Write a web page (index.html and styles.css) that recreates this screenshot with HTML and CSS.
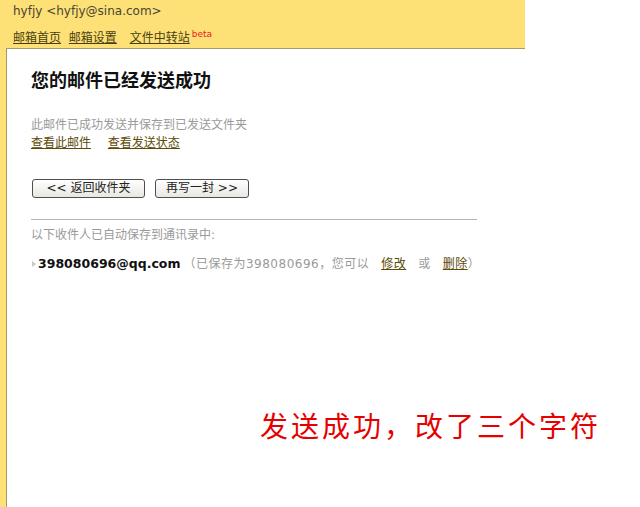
FILE: index.html
```html
<!DOCTYPE html>
<html lang="zh-CN">
<head>
    <meta charset="UTF-8">
    <title>邮件发送成功</title>
    <link rel="stylesheet" href="styles.css">
</head>
<body>
    <div class="wrap">
        <div class="header">
            <div class="user">hyfjy &lt;hyfjy@sina.com&gt;</div>
            <div class="nav">
                <a href="#">邮箱首页</a>
                <a href="#">邮箱设置</a>
                <a href="#" class="far">文件中转站</a><sup class="beta">beta</sup>
            </div>
        </div>
        <div class="main">
            <h2 class="title">您的邮件已经发送成功</h2>
            <p class="tip">此邮件已成功发送并保存到已发送文件夹</p>
            <div class="links">
                <a href="#">查看此邮件</a>
                <a href="#">查看发送状态</a>
            </div>
            <div class="buttons">
                <button class="btn back">&lt;&lt; 返回收件夹</button>
                <button class="btn again">再写一封 &gt;&gt;</button>
            </div>
            <div class="divider"></div>
            <p class="tip saved">以下收件人已自动保存到通讯录中:</p>
            <div class="contact">
                <span class="arrow"></span>
                <b class="addr">398080696@qq.com</b>
                <span class="note">（已保存为398080696，您可以<a href="#">修改</a>或<a href="#" class="last">删除</a>）</span>
            </div>
        </div>
    </div>
    <div class="remark">发送成功，改了三个字符</div>
</body>
</html>
```

FILE: styles.css
```css
body {
    margin: 0;
    background: #fff;
    font-family: "DejaVu Sans", "Noto Sans CJK SC", sans-serif;
    font-size: 12px;
    color: #333;
}

.wrap {
    width: 525px;
    min-height: 100vh;
    background: #fde177;
    display: flex;
    flex-direction: column;
}

.header {
    height: 48px;
    padding-left: 13px;
    box-sizing: border-box;
}

.user {
    padding-top: 3px;
    line-height: 17px;
    font-size: 12px;
    color: #4a4434;
}

.nav {
    margin-top: 6px;
    line-height: 16px;
}

.nav a {
    color: #4a3f10;
    margin-right: 4px;
}

.nav a.far {
    margin-left: 5px;
    margin-right: 0;
}

.beta {
    color: #e8231d;
    font-size: 9px;
    margin-left: 2px;
    vertical-align: 5px;
}

.main {
    flex: 1;
    margin-left: 6px;
    background: #fff;
    border-top: 1px solid #a39b6b;
    border-left: 1px solid #a39b6b;
    padding: 22px 0 0 24px;
}

.title {
    margin: 0;
    font-size: 18px;
    line-height: 20px;
    color: #111;
    font-weight: bold;
}

.tip {
    margin: 25px 0 0;
    line-height: 18px;
    color: #9a9a9a;
}

.links {
    line-height: 18px;
}

.links a {
    color: #5c4a06;
    margin-right: 13px;
}

.buttons {
    margin-top: 27px;
    display: flex;
    gap: 10px;
    margin-left: 1px;
}

.btn {
    height: 19px;
    padding: 0;
    border: 1px solid #4f4f4f;
    border-radius: 3px;
    background: linear-gradient(#ffffff, #e9e7e2);
    font-family: "DejaVu Sans", "Noto Sans CJK SC", sans-serif;
    font-size: 12px;
    color: #222;
    line-height: 17px;
}

.back {
    width: 113px;
}

.again {
    width: 94px;
}

.divider {
    margin-top: 21px;
    width: 446px;
    height: 1px;
    background: #b5b5b5;
}

.saved {
    margin-top: 6px;
}

.contact {
    margin-top: 11px;
    line-height: 18px;
    display: flex;
    align-items: center;
}

.arrow {
    width: 0;
    height: 0;
    border-top: 3px solid transparent;
    border-bottom: 3px solid transparent;
    border-left: 4px solid #c9c9c9;
    margin: 0 2px 0 1px;
}

.addr {
    font-size: 12.5px;
    color: #111;
}

.note {
    margin-left: 3px;
    color: #9a9a9a;
    letter-spacing: 0.5px;
}

.note a {
    color: #5c4a06;
    margin: 0 12px;
}

.note a.last {
    margin-right: 0;
}

.remark {
    position: absolute;
    left: 260px;
    top: 407px;
    font-family: "Noto Sans CJK SC", sans-serif;
    font-size: 28px;
    line-height: 36px;
    letter-spacing: 3px;
    color: #e60000;
}
```
